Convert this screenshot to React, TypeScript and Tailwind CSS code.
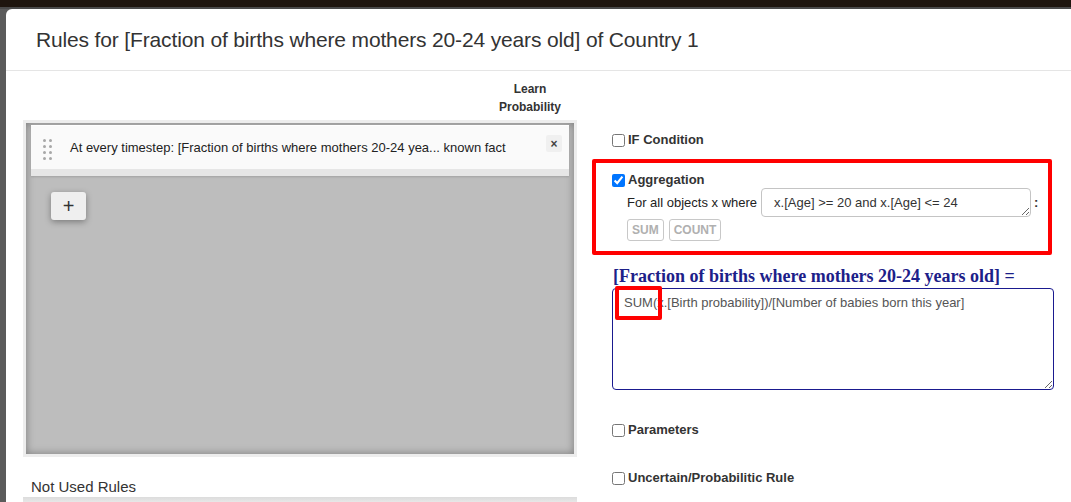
import React from "react";

const sans = { fontFamily: '"Liberation Sans", Arial, sans-serif' };

const CheckRow = ({ label, checked = false }: { label: string; checked?: boolean }) => (
  <label className="flex items-center h-[18px] gap-[3px] text-[13px] font-bold text-[#333] whitespace-nowrap">
    <input type="checkbox" defaultChecked={checked} className="w-[13px] h-[13px] m-0" />
    <span>{label}</span>
  </label>
);

const DragDots = () => (
  <div className="grid grid-cols-2 gap-x-[3px] gap-y-[3px] w-[9px] mt-[-1px]">
    {Array.from({ length: 8 }).map((_, i) => (
      <span key={i} className="block w-[3px] h-[3px] rounded-full bg-[#a8a8a8]" />
    ))}
  </div>
);

export default function App() {
  return (
    <div className="w-[1071px] h-[502px] overflow-hidden bg-[#5b5b5b] flex flex-col" style={sans}>
      <div className="h-[7px] bg-[#1e150e] shrink-0" />
      <div className="h-[2px] bg-[#4a4a4a] shrink-0" />
      <div className="flex-1 ml-[6px] bg-white rounded-tl-[6px] flex flex-col">
        {/* header */}
        <div className="h-[62px] border-b border-[#e5e5e5] flex items-center pl-[30px]">
          <h3 className="text-[21px] text-[#333] tracking-[-0.15px] whitespace-nowrap">
            Rules for [Fraction of births where mothers 20-24 years old] of Country 1
          </h3>
        </div>

        {/* body */}
        <div className="flex">
          {/* left column */}
          <div className="ml-[17px] w-[554px] flex flex-col">
            <div className="pt-[9px] pr-[16px] text-[12px] font-bold leading-[18px] text-[#333]">
              <div className="w-fit ml-auto text-center">
                Learn
                <br />
                Probability
              </div>
            </div>
            <div className="mt-[4px] h-[337px] bg-[#ededed] p-[3px]">
              <div className="h-full bg-[#bdbdbd] shadow-[inset_0_0_9px_rgba(0,0,0,0.35)] px-[5px] pt-[2px]">
                <div className="relative h-[51px] bg-[#fafafa] border-t border-[#fff] shadow-[0_1px_2px_rgba(0,0,0,0.15)] flex">
                  <div className="flex-1 flex items-start pt-[14px] pl-[12px] gap-[18px] text-[13px] text-[#222] leading-[16px] border-b-[7px] border-[#e6e6e6] whitespace-nowrap">
                    <DragDots />
                    <span>At every timestep: [Fraction of births where mothers 20-24 yea... known fact</span>
                  </div>
                  <span className="absolute right-[7px] top-[9px] w-[16px] h-[17px] bg-[#f0f0f0] rounded-[2px] flex items-center justify-center text-[12px] font-bold text-[#444]">
                    ×
                  </span>
                </div>
                <button className="mt-[16px] ml-[20px] w-[35px] h-[28px] rounded-[3px] bg-[#efefef] shadow-[0_2px_6px_rgba(0,0,0,0.35)] text-[20px] leading-none text-[#333] flex items-center justify-center">
                  +
                </button>
              </div>
            </div>
            <div className="mt-[20px] h-[20px] pl-[8px] text-[15px] leading-[20px] text-[#333]">Not Used Rules</div>
            <div className="h-[10px] bg-gradient-to-b from-[#dcdcdc] to-[#f2f2f2]" />
          </div>

          {/* right column */}
          <div className="ml-[15px] w-[462px] flex flex-col pt-[60px]">
            <div className="pl-[20px]">
              <CheckRow label="IF Condition" />
            </div>

            <div className="mt-[10px] w-[460px] border-[4px] border-[#ff0000] rounded-[2px] pl-[16px] pt-[9px] pb-[10px]">
              <div className="h-[16px] flex items-center">
                <CheckRow label="Aggregation" checked />
              </div>
              <div className="ml-[15px] flex items-center h-[29px] text-[13px] text-[#333] whitespace-nowrap">
                <span className="text-[#222]">For all objects x where</span>
                <textarea
                  readOnly
                  rows={1}
                  defaultValue="x.[Age] >= 20 and x.[Age] <= 24"
                  className="ml-[4px] w-[270px] h-[29px] shrink-0 border border-[#c4c4c4] rounded-[4px] px-[12px] py-[5px] leading-[17px] text-[13px] text-[#333] overflow-hidden"
                />
                <span className="ml-[3px] font-bold">:</span>
              </div>
              <div className="ml-[15px] mt-[2px] flex gap-[5px]">
                <button className="h-[22px] px-[4px] border border-[#c8c8c8] rounded-[3px] text-[12px] font-bold text-[#b0b0b0]">
                  SUM
                </button>
                <button className="h-[22px] px-[4px] border border-[#c8c8c8] rounded-[3px] text-[12px] font-bold text-[#b0b0b0]">
                  COUNT
                </button>
              </div>
            </div>

            <div
              className="mt-[10px] ml-[21px] h-[22px] leading-[22px] text-[18px] font-bold text-[#1c2089] whitespace-nowrap"
              style={{ fontFamily: '"Liberation Serif", "Times New Roman", serif' }}
            >
              [Fraction of births where mothers 20-24 years old] =
            </div>
            <div className="relative mt-[1px] ml-[20px]">
              <textarea
                readOnly
                defaultValue="SUM(x.[Birth probability])/[Number of babies born this year]"
                className="block w-[442px] h-[102px] border border-[#1a1a8f] rounded-[4px] px-[11px] pt-[6px] leading-[16px] text-[13px] text-[#555]"
              />
              <div className="absolute left-[3px] top-[-2px] w-[47px] h-[34px] border-[4px] border-[#ff0000] rounded-[2px]" />
            </div>

            <div className="mt-[31px] pl-[20px]">
              <CheckRow label="Parameters" />
            </div>
            <div className="mt-[30px] pl-[20px]">
              <CheckRow label="Uncertain/Probabilitic Rule" />
            </div>
          </div>
        </div>
      </div>
    </div>
  );
}
